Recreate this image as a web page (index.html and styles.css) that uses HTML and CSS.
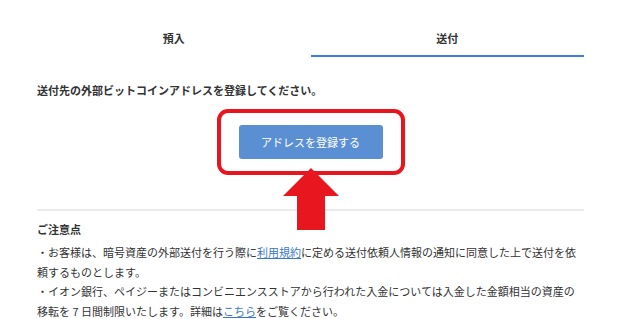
FILE: index.html
```html
<!DOCTYPE html>
<html>
<head>
  <title>送付</title>
  <link rel="stylesheet" href="styles.css">
</head>
<body>
  <div class="page">
    <!-- Tabs -->
    <div class="tabs">
      <div class="tab">預入</div>
      <div class="tab active">送付</div>
    </div>

    <p class="lead">送付先の外部ビットコインアドレスを登録してください。</p>

    <!-- Register button with callout -->
    <div class="register">
      <div class="callout">
        <button type="button" class="register-button">アドレスを登録する</button>
      </div>
      <svg class="arrow" width="56" height="62" viewBox="0 0 56 62">
        <polygon points="28,0 56,28 42,28 42,62 14,62 14,28 0,28" fill="#e8161f"/>
      </svg>
    </div>

    <hr class="divider">

    <!-- Notes -->
    <div class="notes">
      <h3>ご注意点</h3>
      <p>・お客様は、暗号資産の外部送付を行う際に<a href="#">利用規約</a>に定める送付依頼人情報の通知に同意した上で送付を依頼するものとします。</p>
      <p>・イオン銀行、ペイジーまたはコンビニエンスストアから行われた入金については入金した金額相当の資産の移転を 7 日間制限いたします。詳細は<a href="#">こちら</a>をご覧ください。</p>
    </div>
  </div>
</body>
</html>
```

FILE: styles.css
```css
/* Send tab page */
body {
  margin: 0;
  background-color: #fff;
  font-family: "Noto Sans CJK JP", "Liberation Sans", sans-serif;
  font-size: 11px;
  color: #333;
}

.page {
  width: 547px;
  padding: 0 36px 0 37px;
}

.tabs {
  display: flex;
}

.tab {
  flex: 1;
  text-align: center;
  font-weight: bold;
  line-height: 16px;
  padding: 30px 0 9px;
  border-bottom: 2px solid transparent;
}

.tab.active {
  border-bottom-color: #3b7dd8;
}

.lead {
  margin: 25px 0 0;
  font-weight: bold;
  line-height: 16px;
}

.register {
  position: relative;
  display: flex;
  justify-content: center;
  margin-top: 11px;
}

.callout {
  border: 4px solid #e8141e;
  border-radius: 11px;
  padding: 12px 18px;
}

.register-button {
  display: block;
  width: 144px;
  height: 34px;
  border: none;
  border-radius: 3px;
  background-color: #5b8fd3;
  color: #fff;
  font-family: inherit;
  font-size: 11px;
  cursor: pointer;
}

.arrow {
  position: absolute;
  top: 59px;
  left: 50%;
  margin-left: -28px;
}

.divider {
  margin: 34px 0 0;
  border: none;
  height: 2px;
  background-color: #ebebeb;
}

.notes h3 {
  margin: 10px 0 0;
  font-size: 11px;
  line-height: 16px;
}

.notes p {
  margin: 6px 0 0;
  line-height: 19.5px;
}

.notes p + p {
  margin-top: 0;
}

.notes a {
  color: #3a78c8;
}
```
